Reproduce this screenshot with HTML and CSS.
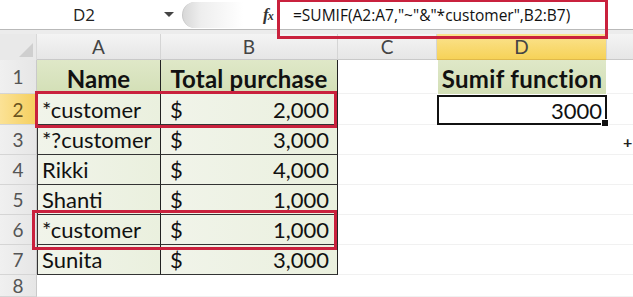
FILE: index.html
```html
<!DOCTYPE html>
<html>
<head>
<meta charset="utf-8">
<link rel="stylesheet" href="styles.css">
</head>
<body>
<div class="app">
  <div class="fbar">
    <div class="namebox"><span class="nb-text">D2</span><span class="nb-arrow"></span></div>
    <div class="pill"></div>
    <div class="fx"><i>f</i><i class="x">x</i></div>
    <div class="formula">=SUMIF(A2:A7,"~"&amp;"*customer",B2:B7)</div>
  </div>
  <div class="strip"></div>
  <div class="sheet">
    <div class="corner"><span class="tri"></span></div>
    <div class="ch">A</div>
    <div class="ch">B</div>
    <div class="ch">C</div>
    <div class="ch ch-sel">D</div>
    <div class="ch ch-rest"></div>

    <div class="rh">1</div>
    <div class="c hd colA">Name</div>
    <div class="c hd colB">Total purchase</div>
    <div class="c blank"></div>
    <div class="c hd hdD">Sumif function</div>
    <div class="c blank"></div>

    <div class="rh rh-sel">2</div>
    <div class="c dt colA">*customer</div>
    <div class="c dt colB"><span>$</span><span>2,000</span></div>
    <div class="c blank"></div>
    <div class="c active">3000<span class="handle"></span></div>
    <div class="c blank"></div>

    <div class="rh">3</div>
    <div class="c dt colA">*?customer</div>
    <div class="c dt colB"><span>$</span><span>3,000</span></div>
    <div class="c blank"></div>
    <div class="c blank"></div>
    <div class="c blank"></div>

    <div class="rh">4</div>
    <div class="c dt colA">Rikki</div>
    <div class="c dt colB"><span>$</span><span>4,000</span></div>
    <div class="c blank"></div>
    <div class="c blank"></div>
    <div class="c blank"></div>

    <div class="rh">5</div>
    <div class="c dt colA">Shanti</div>
    <div class="c dt colB"><span>$</span><span>1,000</span></div>
    <div class="c blank"></div>
    <div class="c blank"></div>
    <div class="c blank"></div>

    <div class="rh">6</div>
    <div class="c dt colA">*customer</div>
    <div class="c dt colB"><span>$</span><span>1,000</span></div>
    <div class="c blank"></div>
    <div class="c blank"></div>
    <div class="c blank"></div>

    <div class="rh">7</div>
    <div class="c dt colA">Sunita</div>
    <div class="c dt colB"><span>$</span><span>3,000</span></div>
    <div class="c blank"></div>
    <div class="c blank"></div>
    <div class="c blank"></div>

    <div class="rh">8</div>
    <div class="c blank"></div>
    <div class="c blank"></div>
    <div class="c blank"></div>
    <div class="c blank"></div>
    <div class="c blank"></div>
  </div>

  <div class="hl hl-formula"></div>
  <div class="hl hl-row2"></div>
  <div class="hl hl-row6"></div>
  <div class="cursor">+</div>
</div>
</body>
</html>
```
FILE: styles.css
```css
html, body { margin: 0; padding: 0; }
body { background: #fff; overflow: hidden; }
.app {
  position: relative;
  width: 633px;
  height: 297px;
  overflow: hidden;
  font-family: Lato, "Open Sans", sans-serif;
  background: #fff;
}
.fbar {
  height: 29px;
  display: flex;
  align-items: center;
  background: #fff;
  border-bottom: 1px solid #b9b9b9;
}
.namebox {
  width: 178px;
  height: 29px;
  display: flex;
  align-items: center;
  position: relative;
}
.nb-text {
  flex: 1;
  text-align: center;
  font-family: "Open Sans", sans-serif;
  font-size: 17px;
  color: #222;
  padding-left: 4px;
}
.nb-arrow {
  width: 0; height: 0;
  border-left: 5px solid transparent;
  border-right: 5px solid transparent;
  border-top: 5px solid #444;
  margin-right: 4px;
}
.pill {
  width: 60px;
  height: 26px;
  margin-left: 4px;
  border-radius: 13px 0 0 13px;
  background: linear-gradient(90deg, #d8d8d8 0%, #eeeeee 30%, #fff 100%);
  border-left: 1px solid #c8c8c8;
}
.fx {
  margin-left: 20px;
  width: 20px;
  font-family: "Liberation Serif", serif;
  font-size: 17px;
  font-weight: bold;
  color: #333;
}
.fx i { font-style: italic; }
.fx .x { font-size: 12px; margin-left: -1px; }
.formula {
  margin-left: 10px;
  font-family: "Open Sans", sans-serif;
  font-size: 15.5px;
  color: #111;
  white-space: nowrap;
}
.strip {
  height: 4px;
  background: #ececec;
}
.sheet {
  display: grid;
  grid-template-columns: 37px 124px 177px 99px 170px 1fr;
  grid-template-rows: 26px 34px 31px repeat(5, 30px) 22px;
}
.corner {
  background: #e9e9e9;
  border-right: 1px solid #d9d9d9;
  position: relative;
}
.tri {
  position: absolute;
  right: 3px;
  bottom: 3px;
  width: 0; height: 0;
  border-left: 14px solid transparent;
  border-bottom: 14px solid #cfcfcf;
}
.ch {
  background: linear-gradient(#f4f4f4, #e6e6e6);
  border-right: 1px solid #d5d5d5;
  border-bottom: 1px solid #c9c9c9;
  display: flex;
  align-items: center;
  justify-content: center;
  font-size: 19px;
  color: #444;
}
.ch-sel {
  background: linear-gradient(#fbe38f, #f6d258);
  border-bottom-color: #e0b94a;
}
.ch-rest { border-right: none; }
.rh {
  background: linear-gradient(90deg, #f0f0f0, #e6e6e6);
  border-bottom: 1px solid #d5d5d5;
  border-right: 1px solid #c9c9c9;
  display: flex;
  align-items: center;
  justify-content: center;
  font-size: 19px;
  color: #555;
}
.rh-sel {
  background: linear-gradient(90deg, #fbe296, #f5cf5e);
  color: #6a5420;
}
.c {
  display: flex;
  align-items: center;
  font-size: 22px;
  color: #111;
  box-sizing: border-box;
  white-space: nowrap;
}
.blank {
  border-bottom: 1px solid #f1f1f1;
}
.hd {
  font-weight: bold;
  font-size: 24px;
  justify-content: center;
  background: linear-gradient(#dfe8c8, #d3dfb6);
  padding-top: 3px;
}
.hd.colA { border-right: 1px solid #222; }
.hd.colB { border-right: 1px solid #222; letter-spacing: 0.2px; }
.hdD {
  margin: 0 1px;
  letter-spacing: 0.3px;
}
.dt {
  background: linear-gradient(90deg, #f1f4ea, #eaf0de);
  border-bottom: 1px solid #333;
  border-right: 1px solid #222;
}
.dt.colA { border-left: 1px solid #333; padding-left: 4px; }
.dt.colB { justify-content: space-between; padding: 0 8px 0 9px; }
.active {
  border: 2px solid #111;
  justify-content: flex-end;
  padding-right: 3px;
  position: relative;
  margin-top: 1px;
}
.handle {
  position: absolute;
  right: -4px;
  bottom: -4px;
  width: 6px;
  height: 6px;
  background: #111;
  border: 1px solid #fff;
}
.hl {
  position: absolute;
  border: 3px solid #c9213d;
  box-sizing: border-box;
}
.hl-formula { left: 277px; top: -1px; width: 331px; height: 40px; }
.hl-row2 { left: 35px; top: 91px; width: 302px; height: 37px; }
.hl-row6 { left: 32px; top: 210px; width: 305px; height: 40px; }
.cursor {
  position: absolute;
  left: 623px;
  top: 132px;
  font-size: 16px;
  font-weight: bold;
  color: #222;
}
```
